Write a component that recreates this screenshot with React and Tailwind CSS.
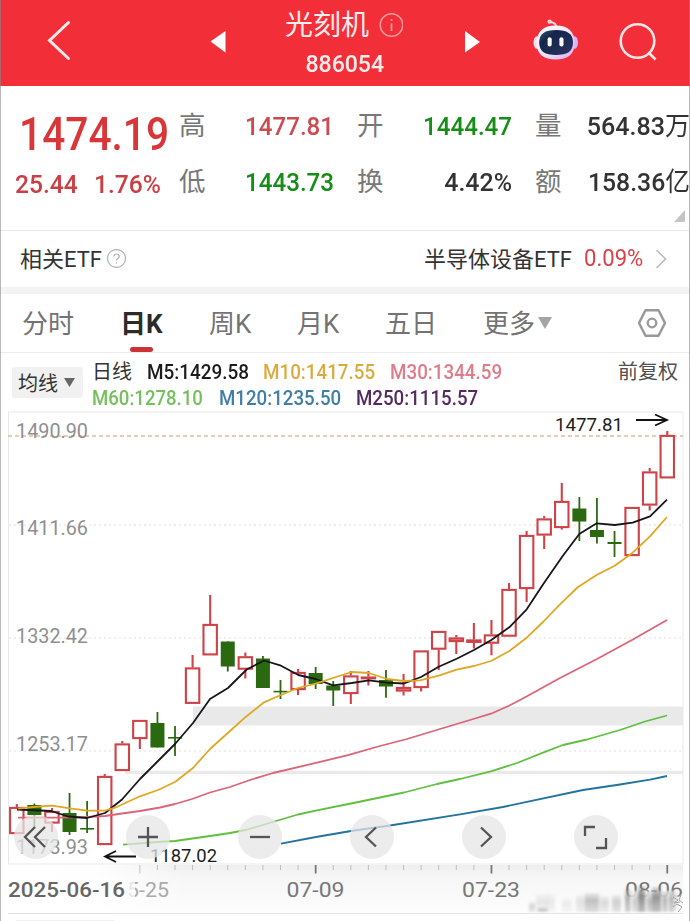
import React from "react";

const CN = "font-['Roboto','Noto_Sans_CJK_SC',sans-serif]";
const RED = "#cf4247";
const GREEN = "#2b6911";
const STEP = 17.58;
const X0 = 16.8;

// [high, bodyTop, bodyBottom, low, rising]
const candles = [
  [804, 807, 834, 834, 1], [803.5, 805, 815, 829, 0], [808, 811, 823.5, 832, 1],
  [793, 813, 832, 835, 0], [801, 828, 829.6, 833, 0], [774, 776, 845, 845, 1],
  [741, 743.5, 771, 771, 1], [720, 720, 739, 749, 1], [712, 723, 747.5, 747.5, 0],
  [726, 737, 738.6, 756, 0], [655, 667.5, 703.8, 703.8, 1], [595, 624, 655.3, 655.3, 1],
  [641.5, 641.5, 666.5, 671.5, 0], [652.5, 656.3, 669.6, 678.5, 1], [656, 658.5, 688, 688, 0],
  [680, 690.8, 692.4, 699, 0], [669, 672, 690, 695, 1], [667, 673, 684, 689, 0],
  [681, 685.5, 690.5, 706, 0], [671, 675.5, 694, 704, 1], [671, 676.6, 678.8, 685.5, 1],
  [670, 680, 686.5, 697.8, 0], [674, 687, 691.5, 695.5, 1], [650.5, 650.5, 688, 691.5, 1],
  [631, 631, 649.6, 670, 1], [635, 637.5, 642, 654, 1], [623, 639.5, 642.8, 648.5, 1],
  [620, 634.5, 643.6, 655.3, 1], [583, 589, 636.6, 636.6, 1], [531, 535, 589, 602, 1],
  [516, 518.5, 535.5, 549, 1], [483, 501, 528, 529.6, 1], [497, 508.5, 521.5, 541, 0],
  [498, 530, 537, 543.6, 0], [531, 542, 544, 557, 0], [507, 507, 556, 556, 1],
  [468, 471.5, 505.5, 510.5, 1], [431, 435, 478.3, 478.3, 1],
];

const averages = [
  ["#dc6478", "18,817.7 60,817.6 87,817 105,816 122,813.5 140,811 160,807.5 175,804 192,799 210,792.5 230,787 250,780 273,773 317,762.7 347,755.3 380,746 407,739 440,729 470,720 491,713.7 509,705.7 527,696.3 560,678 597,659 632,640 667,620"],
  ["#5fbf3f", "123,844.7 158,842 175,841 210,836 230,833 246,830 276,821 298,814.5 317,810.3 351,803.5 404,792.5 437,784 460,779 490,771.7 517,763 543,752.7 563,745 587,739.5 620,730 645,721.5 667,715.5"],
  ["#23739f", "281,843.7 316,837 351,831 390,825.5 460,814.4 503,807 583,790 620,784.5 650,779.7 667,776"],
  ["#16161c", "17,809.5 51,811 68,816.5 87,818 105,813 122,799.5 140,779 157,762 175,744 193,723 210,699 228,688 246.7,669.5 264,660.5 281,665.7 298.3,675 315.7,679 333,685.3 351.7,683 369,680.3 386.7,682.7 404,683.5 421,677 438.7,666.7 456.7,658.7 474,650 491.3,640 509.3,627.3 526.7,609.3 544,583 562.7,556 579.3,534 596.7,523.3 614.7,525 632.7,522.7 650,516.3 667,499.7"],
  ["#e0a722", "18,808.7 33,807 52,805.7 70,808.3 87,810.7 105,810.7 115,807.7 140,796.3 158,790 175,782 193,768 210,749 230,731 246,716.7 264,702.3 281,695 298,688 315.7,683.7 333,678 351.7,672 369,673 386.7,679 404,681 420,680.3 438.7,675.7 456.7,669.7 474,666 491,661 509,651.3 526.7,637.7 543,622 560,604.3 578,587 597,574.7 614.7,565.7 632.7,552.7 650,536.3 667,517"],
];

function Candle({ x, c }) {
  const [hi, top, bot, lo, up] = c;
  if (!up)
    return (
      <g>
        <line x1={x} x2={x} y1={hi} y2={lo} stroke={GREEN} strokeWidth="1.8" />
        <rect x={x - 7} y={top} width="14" height={bot - top} fill={GREEN} />
      </g>
    );
  return (
    <g stroke={RED} strokeWidth="2.1">
      {hi < top && <line x1={x} x2={x} y1={hi} y2={top} />}
      {lo > bot && <line x1={x} x2={x} y1={bot} y2={lo} />}
      <rect x={x - 6.7} y={top + 0.9} width="13.4" height={Math.max(bot - top - 1.8, 0.8)} fill={bot - top < 5 ? "#e98b8e" : "#fff"} />
    </g>
  );
}

function Label({ x, y, w, size = 21, fill = "#8f8f8f", weight = 400, opacity = 1, children }) {
  return (
    <text x={x} y={y} fontSize={size} fill={fill} fontWeight={weight} opacity={opacity} textLength={w} lengthAdjust="spacingAndGlyphs" fontFamily="Roboto, sans-serif">
      {children}
    </text>
  );
}

const smudges = [
  [529, 6, 10, 0.3], [536, 12, 18, 0.16], [538, 9, 4, 0.4], [547, 8, 18, 0.14], [562, 10, 14, 0.12], [576, 9, 17, 0.2],
  [585, 14, 19, 0.45], [600, 9, 16, 0.25], [612, 9, 17, 0.35], [625, 5, 24, 0.6], [633, 4, 18, 0.35], [638, 7, 26, 0.85],
  [647, 5, 18, 0.45], [652, 9, 25, 0.75], [663, 4, 20, 0.55], [669, 5, 22, 0.5],
];

function Chart() {
  return (
    <svg className="block" width="690" height="510" viewBox="0 411 690 510">
      <defs>
        <linearGradient id="axis" x1="0" x2="0" y1="0" y2="1">
          <stop offset="0" stopColor="#eeeeee" />
          <stop offset=".25" stopColor="#f6f6f6" />
          <stop offset="1" stopColor="#fdfdfd" />
        </linearGradient>
        <linearGradient id="fade" x1="0" x2="1" y1="0" y2="0">
          <stop offset="0" stopColor="#fff" />
          <stop offset=".5" stopColor="#fff" stopOpacity=".9" />
          <stop offset="1" stopColor="#fff" stopOpacity="0" />
        </linearGradient>
        <linearGradient id="mark" x1="0" x2="0" y1="0" y2="1">
          <stop offset="0" stopColor="#777" stopOpacity=".3" />
          <stop offset=".4" stopColor="#777" />
          <stop offset="1" stopColor="#999" stopOpacity=".7" />
        </linearGradient>
        <filter id="soft"><feGaussianBlur stdDeviation="1.4 1" /></filter>
      </defs>
      <rect x="8.5" y="412" width="674.5" height="452" fill="#fff" stroke="#e9e9e9" />
      <rect x="193" y="706.5" width="490" height="19" fill="#e9e9e9" />
      <rect x="125" y="770.8" width="558" height="3.2" fill="#eaeaea" />
      {[525, 638, 751].map((y) => (
        <line key={y} x1="9" x2="683" y1={y} y2={y} stroke="#dedede" strokeDasharray="2 3" />
      ))}
      <line x1="8" x2="683" y1="436" y2="436" stroke="#c99a70" strokeWidth="1.2" strokeDasharray="4 3" />
      <Label x="16" y="437.5" w="72">1490.90</Label>
      <Label x="16" y="535" w="72">1411.66</Label>
      <Label x="16" y="643" w="72">1332.42</Label>
      <Label x="16" y="751" w="72">1253.17</Label>
      <Label x="16" y="853.5" w="72">1173.93</Label>
      {candles.map((c, i) => <Candle key={i} x={X0 + i * STEP} c={c} />)}
      {averages.map(([color, pts]) => (
        <polyline key={color} points={pts} fill="none" stroke={color} strokeWidth="1.8" strokeLinejoin="round" />
      ))}
      <g fill="none" stroke="#111" strokeWidth="1.8">
        <path d="M636 420H667M655 414.5L667 420L655 425.5" />
        <path d="M136 856.5H105M116 851L105 856.5L116 862" />
      </g>
      <Label x="555" y="430.5" w="68" size="18.5" fill="#1c1c1c">1477.81</Label>
      <Label x="150" y="861.5" w="67" size="18.5" fill="#1c1c1c">1187.02</Label>
      <rect x="8" y="865" width="675" height="48" fill="url(#axis)" />
      <rect x="8" y="865" width="180" height="48" fill="url(#fade)" />
      {Array.from({ length: 31 }, (_, k) => {
        const major = k % 10 === 0;
        return (
          <line key={k} x1={X0 + (k + 7) * STEP} x2={X0 + (k + 7) * STEP} y1="865" y2={major ? 873.5 : 870} stroke={major && k ? "#777" : "#bdbdbd"} strokeWidth={major && k ? 1.8 : 1} />
        );
      })}
      <Label x="8" y="897" w="117" fill="#666" weight={500}>2025-06-16</Label>
      <Label x="127" y="897" w="42" fill="#aaa">5-25</Label>
      <rect x="125" y="878" width="10" height="24" fill="#fbfbfb" opacity=".75" />
      <Label x="286.500" y="897" w="58" fill="#777">07-09</Label>
      <Label x="462" y="897" w="58" fill="#777">07-23</Label>
      <Label x="625" y="897" w="58" fill="#777">08-06</Label>
      <rect x="628" y="891" width="50" height="20" fill="#eee" opacity=".85" filter="url(#soft)" />
      <g filter="url(#soft)">
        {smudges.map(([x, w, h, o]) => (
          <rect key={x} x={x} y={912 - h} width={w} height={h} fill="url(#mark)" opacity={o} />
        ))}
      </g>
      <g fill="none" stroke="#999" strokeWidth=".9">
        <path d="M673 897l5 3-4 3 6-1M673 907l4-3 5 3-4 5M681 895l-2 5 4 3" />
      </g>
      <rect x="8" y="913" width="675" height="1" fill="#e3e3e3" />
      <rect x="16" y="920" width="98" height="1" fill="#efefef" />
    </svg>
  );
}

const buttons = [
  ["ml-[14px]", "M-1 -10L-11 0L-1 10M9 -10L-1 0L9 10"],
  ["ml-[68px]", "M-10 0H10M0 -10V10"],
  ["ml-[68px]", "M-10 0H10"],
  ["ml-[68px]", "M4 -9.500L-6 0L4 9.500"],
  ["ml-[68px]", "M-3 -9.500L7 0L-3 9.500"],
  ["ml-[68px]", "M-11 -1V-10H-1M0 11H10V1"],
];

function Robot() {
  return (
    <svg width="48" height="44" viewBox="0 0 48 44" className="block">
      <defs>
        <linearGradient id="shell" x1="0" x2="1" y1="0" y2="1">
          <stop offset="0" stopColor="#fff" />
          <stop offset=".5" stopColor="#f3e6fa" />
          <stop offset="1" stopColor="#dba9ee" />
        </linearGradient>
        <linearGradient id="visor" x1="0" x2="1" y1="0" y2="1">
          <stop offset="0" stopColor="#2f5670" />
          <stop offset=".3" stopColor="#14254a" />
          <stop offset="1" stopColor="#2b3463" />
        </linearGradient>
      </defs>
      <path d="M24 8.500C24 5 21.500 5 18 3.700" fill="none" stroke="#f8dce4" strokeWidth="2" />
      <circle cx="17.600" cy="3.600" r="2.200" fill="#fbd5db" />
      <ellipse cx="5" cy="24.500" rx="3.500" ry="6.300" fill="#f3dcf8" />
      <ellipse cx="42.500" cy="24.500" rx="3.500" ry="6.300" fill="#d7b4f4" />
      <path d="M23.700 7.500C36 7.500 42.700 13.500 42.700 25C42.700 36 36 41.600 23.700 41.600S4.600 36 4.600 25C4.600 13.500 11.400 7.500 23.700 7.500Z" fill="url(#shell)" />
      <path d="M24 12C35 12 41 15.500 41 24.500C41 33.500 35 37 24 37S7.200 33.500 7.200 24.500C7.200 15.500 13 12 24 12Z" fill="url(#visor)" />
      <rect x="15.600" y="19.300" width="4.100" height="9.300" rx="2.050" fill="#fff" />
      <rect x="27.400" y="19.300" width="4.100" height="9.300" rx="2.050" fill="#fff" />
    </svg>
  );
}

export default function App() {
  return (
    <div className={`${CN} relative h-[921px] w-[690px] overflow-hidden bg-white text-[#333]`}>
      <header className="flex h-[86px] bg-[#f22f38] text-[#ffecec]">
        <svg width="250" height="86" className="shrink-0">
          <path d="M68.500 22.500L49.500 40.500L68.500 58.500" fill="none" stroke="#ffe9e9" strokeWidth="3" strokeLinecap="round" />
          <path d="M210.500 41.500L225.500 31V52.500Z" fill="#fff" />
        </svg>
        <div className="flex w-[190px] shrink-0 flex-col items-center pt-[6px]">
          <div className="flex h-[40px] w-[120px] items-center gap-[8px] whitespace-nowrap text-[28px] leading-[40px]">
            <span>光刻机</span>
            <svg width="26" height="26" className="-mt-[3px] shrink-0">
              <circle cx="14.500" cy="13" r="11.300" fill="none" stroke="#ff9b9e" strokeWidth="1.500" />
              <path d="M14.500 7V9M14.500 11.500V19" stroke="#ff9b9e" strokeWidth="1.700" />
            </svg>
          </div>
          <div className="-mt-px flex h-[38px] items-center text-[24.500px] font-medium"><span className="scale-x-[.94]">886054</span></div>
        </div>
        <svg width="92" height="86" className="shrink-0"><path d="M39.500 42L24.500 31V52.500Z" transform="translate(.5 0)" fill="#fff" /></svg>
        <div className="w-[80px] pt-[18px]"><Robot /></div>
        <svg width="60" height="86" className="shrink-0">
          <circle cx="25.500" cy="41" r="16.800" fill="none" stroke="#ffe6e6" strokeWidth="2.600" />
          <path d="M37 53L43.500 59.500" stroke="#ffe6e6" strokeWidth="2.600" />
        </svg>
      </header>

      <section className="flex h-[145px] border-b border-[#ebebeb]">
        <div className="w-[179px] shrink-0 pt-[21px] text-[#d9363a]">
          <div className="ml-[19px] h-[54px] origin-left scale-x-[.885] whitespace-nowrap text-[46px] font-medium leading-[54px]">1474.19</div>
          <div className="mt-[3px] flex h-[40px] text-[26.500px] font-medium leading-[40px] text-[#c93f44]">
            <span className="ml-[15px] w-[79px] origin-left scale-x-[.93]">25.44</span>
            <span className="w-[70px] origin-left scale-x-[.93]">1.76%</span>
          </div>
        </div>
        <div className="grid shrink-0 grid-cols-[30px_125px_23px_30px_125px_23px_30px_125px] grid-rows-[56px_56px] whitespace-nowrap pt-[12px] text-[26.500px] leading-[56px]">
          <span className="text-[#787878]">高</span>
          <span className="origin-right scale-x-[.91] text-right font-medium text-[#cb4b50]">1477.81</span><i />
          <span className="text-[#787878]">开</span>
          <span className="origin-right scale-x-[.91] text-right font-medium text-[#178c17]">1444.47</span><i />
          <span className="text-[#787878]">量</span>
          <span className="origin-right scale-x-[.945] text-right"><b className="font-medium">564.83</b>万</span>
          <span className="text-[#787878]">低</span>
          <span className="origin-right scale-x-[.91] text-right font-medium text-[#178c17]">1443.73</span><i />
          <span className="text-[#787878]">换</span>
          <span className="origin-right scale-x-[.94] text-right font-medium">4.42%</span><i />
          <span className="text-[#787878]">额</span>
          <span className="origin-right scale-x-[.935] text-right"><b className="font-medium">158.36</b>亿</span>
        </div>
        <svg width="12" height="12" className="absolute left-[674px] top-[210px]"><path d="M11 0V12H0Z" fill="#c4c4c4" /></svg>
      </section>

      <section className="flex h-[56px] items-center whitespace-nowrap text-[22px]">
        <span className="ml-[20px] w-[86px] origin-left text-[22px]">相关ETF</span>
        <svg width="21" height="21" className="shrink-0">
          <circle cx="10.500" cy="9.500" r="9" fill="none" stroke="#b5b5b5" strokeWidth="1.300" />
          <path d="M7.800 7.500Q8 5 10.500 5T13.200 7.400Q13.200 8.800 11.500 9.700Q10.500 10.300 10.500 11.500M10.500 13.300V14.500" fill="none" stroke="#aaa" strokeWidth="1.200" />
        </svg>
        <span className="ml-[297px] w-[160px] origin-left">半导体设备ETF</span>
        <span className="w-[69px] origin-left scale-x-[.96] text-[23px] text-[#d9414a]">0.09%</span>
        <svg width="16" height="22" className="shrink-0"><path d="M3.500 2L12.500 11L3.500 20" fill="none" stroke="#b8b8b8" strokeWidth="1.500" /></svg>
      </section>
      <div className="h-[7px] bg-[#f3f3f3]" />

      <nav className="flex h-[59px] items-center whitespace-nowrap border-b border-[#ececec] text-[26px] text-[#737373]">
        <span className="ml-[22px] mt-[2px] w-[98px]">分时</span>
        <div className="flex h-[58px] w-[89px] flex-col font-bold text-[#2b2b2b]">
          <span className="h-[52px] leading-[60px]">日K</span>
          <i className="ml-[10px] mt-px block h-[6px] w-[23px] rounded-[3px] bg-[#cb3237]" />
        </div>
        <span className="mt-[2px] w-[88px]">周K</span>
        <span className="mt-[2px] w-[88px]">月K</span>
        <span className="mt-[2px] w-[98px]">五日</span>
        <span className="mt-[2px] w-[55px]">更多</span>
        <svg width="14" height="12" className="shrink-0"><path d="M0 0H14L7 12Z" fill="#a5a5a5" /></svg>
        <svg width="30" height="30" className="ml-[85px] shrink-0">
          <path d="M8.500 2.200H21.500L28 15L21.500 27.800H8.500L2 15Z" fill="none" stroke="#999" strokeWidth="2.500" strokeLinejoin="round" />
          <circle cx="15" cy="15" r="4.300" fill="none" stroke="#999" strokeWidth="2.300" />
        </svg>
      </nav>

      <section className="flex h-[58px] whitespace-nowrap text-[20px] leading-[26px]">
        <div className="ml-[12px] mt-[14px] flex h-[31px] w-[71px] items-center gap-[6px] rounded-[3px] bg-[#f1f1f1] pl-[6px]">
          <span className="mt-[2px] text-[20px]">均线</span>
          <svg width="11" height="9"><path d="M0 0H11L5.500 9Z" fill="#666" /></svg>
        </div>
        <div className="ml-[9px] w-[500px] pt-[6px]">
          <div className="flex h-[26px]">
            <span className="w-[55px]">日线</span>
            <span className="w-[116px] origin-left scale-x-[.945] font-medium text-[#1c1c1c]">M5:1429.58</span>
            <span className="w-[127px] origin-left scale-x-[.94] font-medium text-[#dcab40]">M10:1417.55</span>
            <span className="w-[120px] origin-left scale-x-[.94] font-medium text-[#e07c8a]">M30:1344.59</span>
          </div>
          <div className="flex h-[26px]">
            <span className="w-[127px] origin-left scale-x-[.93] font-medium text-[#75c05c]">M60:1278.10</span>
            <span className="w-[137px] origin-left scale-x-[.935] font-medium text-[#407ea6]">M120:1235.50</span>
            <span className="w-[130px] origin-left scale-x-[.935] font-medium text-[#552a60]">M250:1115.57</span>
          </div>
        </div>
        <span className="ml-[26px] pt-[6px] text-[20px] text-[#505050]">前复权</span>
      </section>

      <div className="relative">
        <Chart />
        <div className="absolute left-0 top-[404px] flex">
          {buttons.map(([m, d]) => (
            <button key={d} className={`${m} flex size-[44px] shrink-0 items-center justify-center rounded-full bg-[#e6e6e6]/75`}>
              <svg width="44" height="44" viewBox="-22 -22 44 44"><path d={d} fill="none" stroke="#555" strokeWidth="2.300" /></svg>
            </button>
          ))}
        </div>
      </div>
      <div className="pointer-events-none absolute inset-0 border-x border-[#888]/60" />
    </div>
  );
}
